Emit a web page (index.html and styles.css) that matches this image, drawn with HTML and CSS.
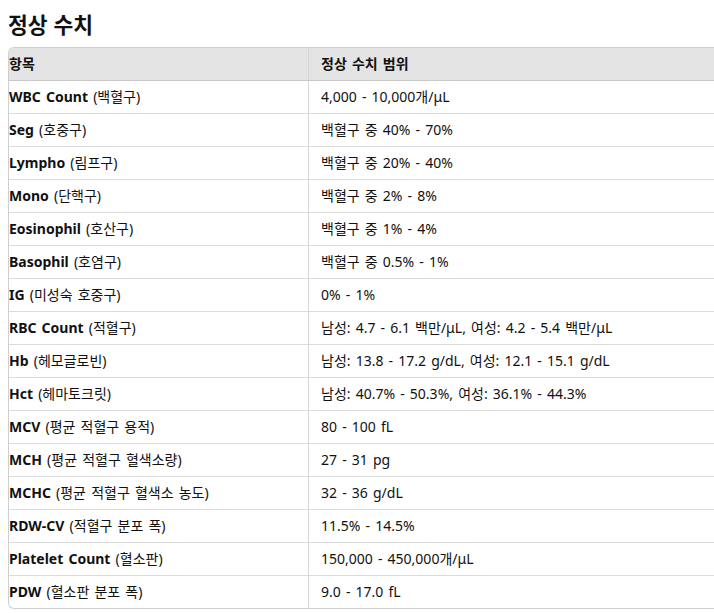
FILE: index.html
```html
<!DOCTYPE html>
<html lang="ko">
<head>
<meta charset="utf-8">
<link rel="stylesheet" href="styles.css">
</head>
<body>
<h2 class="title">정상 수치</h2>
<div class="wrap">
<table class="ref">
<thead>
<tr><th class="c1">항목</th><th class="c2">정상 수치 범위</th></tr>
</thead>
<tbody>
<tr><td class="c1"><b>WBC Count</b> (백혈구)</td><td class="c2">4,000 - 10,000개/μL</td></tr>
<tr><td class="c1"><b>Seg</b> (호중구)</td><td class="c2">백혈구 중 40% - 70%</td></tr>
<tr><td class="c1"><b>Lympho</b> (림프구)</td><td class="c2">백혈구 중 20% - 40%</td></tr>
<tr><td class="c1"><b>Mono</b> (단핵구)</td><td class="c2">백혈구 중 2% - 8%</td></tr>
<tr><td class="c1"><b>Eosinophil</b> (호산구)</td><td class="c2">백혈구 중 1% - 4%</td></tr>
<tr><td class="c1"><b>Basophil</b> (호염구)</td><td class="c2">백혈구 중 0.5% - 1%</td></tr>
<tr><td class="c1"><b>IG</b> (미성숙 호중구)</td><td class="c2">0% - 1%</td></tr>
<tr><td class="c1"><b>RBC Count</b> (적혈구)</td><td class="c2">남성: 4.7 - 6.1 백만/μL, 여성: 4.2 - 5.4 백만/μL</td></tr>
<tr><td class="c1"><b>Hb</b> (헤모글로빈)</td><td class="c2">남성: 13.8 - 17.2 g/dL, 여성: 12.1 - 15.1 g/dL</td></tr>
<tr><td class="c1"><b>Hct</b> (헤마토크릿)</td><td class="c2">남성: 40.7% - 50.3%, 여성: 36.1% - 44.3%</td></tr>
<tr><td class="c1"><b>MCV</b> (평균 적혈구 용적)</td><td class="c2">80 - 100 fL</td></tr>
<tr><td class="c1"><b>MCH</b> (평균 적혈구 혈색소량)</td><td class="c2">27 - 31 pg</td></tr>
<tr><td class="c1"><b>MCHC</b> (평균 적혈구 혈색소 농도)</td><td class="c2">32 - 36 g/dL</td></tr>
<tr><td class="c1"><b>RDW-CV</b> (적혈구 분포 폭)</td><td class="c2">11.5% - 14.5%</td></tr>
<tr><td class="c1"><b>Platelet Count</b> (혈소판)</td><td class="c2">150,000 - 450,000개/μL</td></tr>
<tr><td class="c1"><b>PDW</b> (혈소판 분포 폭)</td><td class="c2">9.0 - 17.0 fL</td></tr>
</tbody>
</table>
</div>
</body>
</html>
```

FILE: styles.css
```css
body {
  margin: 8px 0 8px 8px;
  font-family: "Noto Sans", "Noto Sans CJK KR", sans-serif;
  color: #111;
  background: #fff;
}
.title {
  margin: 4px 0 11px 0;
  font-size: 21.5px;
  line-height: 24px;
  font-weight: 700;
  font-family: "Noto Sans CJK KR", "Noto Sans", sans-serif;
  color: #111;
}
.wrap {
  border: 1px solid #cfcfcf;
  border-right: none;
  border-radius: 6px 0 0 6px;
  overflow: hidden;
}
.ref {
  width: 100%;
  border-collapse: collapse;
  font-size: 14px;
  word-spacing: 1.5px;
}
.ref th, .ref td {
  text-align: left;
  padding: 8px 12px;
  line-height: 16px;
  height: 16px;
  white-space: nowrap;
}
.ref th {
  background: #e4e4e4;
  font-weight: 700;
  border-bottom: 1px solid #c6c6c6;
}
.ref td {
  border-top: 1px solid #dcdcdc;
}
.ref tbody tr:first-child td {
  border-top: none;
}
.ref .c1 {
  width: 287px;
  padding-left: 0;
  border-right: 1px solid #d6d6d6;
}
.ref td.c1 b {
  font-weight: 700;
}
```
